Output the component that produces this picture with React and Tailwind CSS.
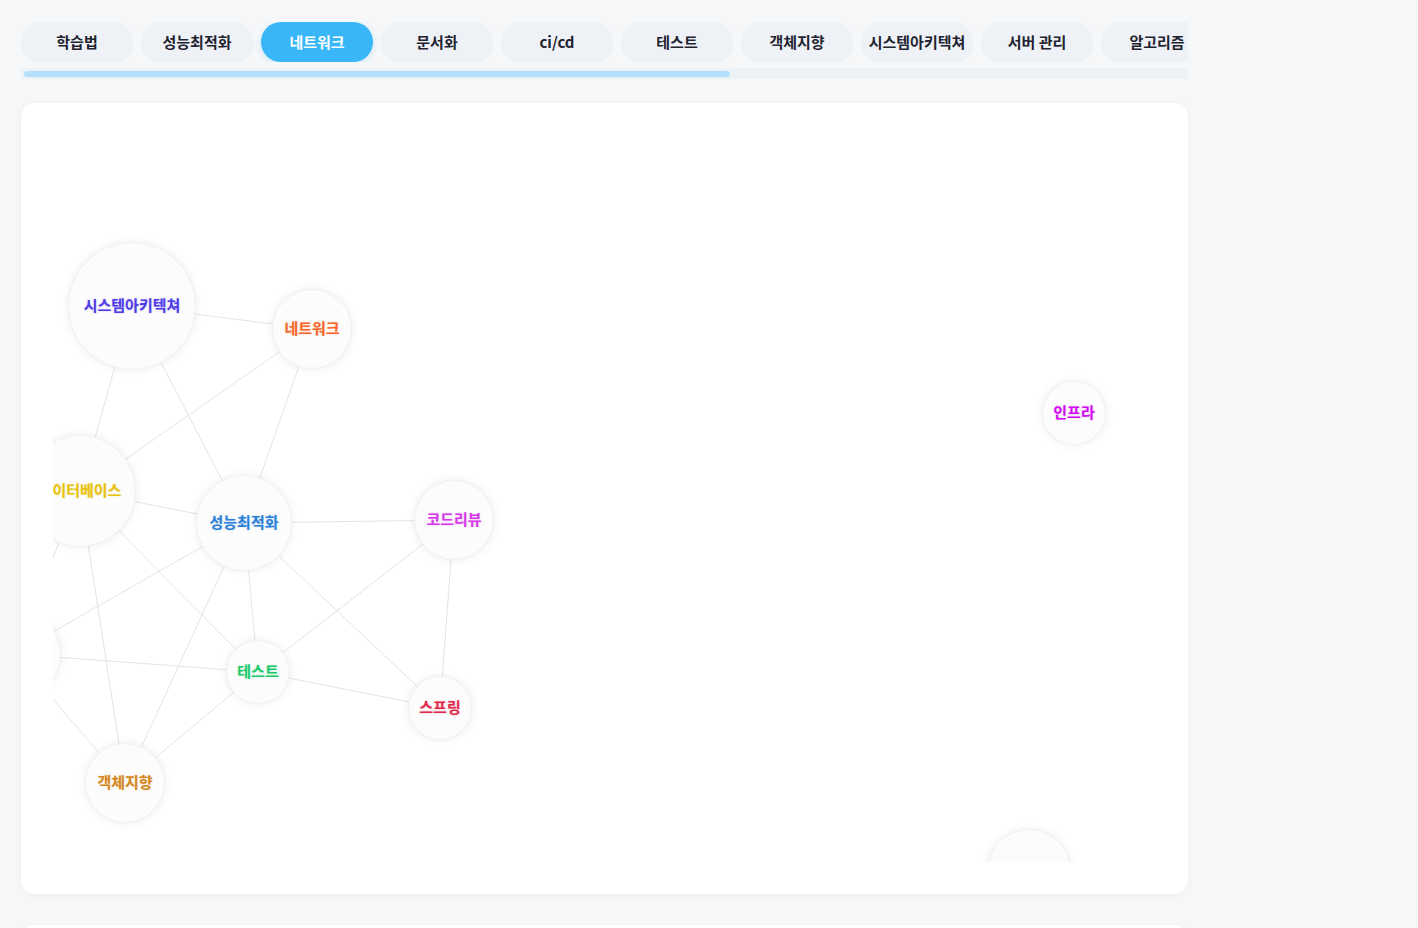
import React from "react";

const tabs = ["학습법", "성능최적화", "네트워크", "문서화", "ci/cd", "테스트", "객체지향", "시스템아키텍쳐", "서버 관리", "알고리즘"];

const OX = 53;
const OY = 135;

const nodes = {
  arch: { label: "시스템아키텍쳐", x: 132, y: 306, r: 64, color: "#4f3be6" },
  net: { label: "네트워크", x: 312, y: 329, r: 40, color: "#f5662a" },
  infra: { label: "인프라", x: 1074, y: 413, r: 32, color: "#d00cf0" },
  db: { label: "데이터베이스", x: 80, y: 491, r: 56, color: "#e8c10c" },
  perf: { label: "성능최적화", x: 244, y: 523, r: 48, color: "#2b80d6" },
  review: { label: "코드리뷰", x: 454, y: 520, r: 40, color: "#d43ae8" },
  left: { label: "", x: 14, y: 654, r: 47, color: "#888" },
  test: { label: "테스트", x: 258, y: 672, r: 32, color: "#1dc96a" },
  spring: { label: "스프링", x: 440, y: 708, r: 32, color: "#e0284c" },
  oop: { label: "객체지향", x: 125, y: 783, r: 40, color: "#d3871f" },
  bottom: { label: "", x: 1029, y: 871, r: 42, color: "#888" },
};

const edges = [
  ["arch", "net"],
  ["arch", "db"],
  ["arch", "perf"],
  ["net", "db"],
  ["net", "perf"],
  ["db", "perf"],
  ["db", "test"],
  ["db", "oop"],
  ["db", "left"],
  ["perf", "review"],
  ["perf", "left"],
  ["perf", "test"],
  ["perf", "spring"],
  ["perf", "oop"],
  ["review", "test"],
  ["review", "spring"],
  ["test", "spring"],
  ["test", "left"],
  ["test", "oop"],
  ["left", "oop"],
];

function Node({ n }) {
  return (
    <div
      className="absolute flex items-center justify-center rounded-full bg-[#fcfcfc] border border-[#f1f1f1] shadow-[0_0_8px_rgba(0,0,0,0.08)]"
      style={{
        left: n.x - OX - n.r,
        top: n.y - OY - n.r,
        width: n.r * 2,
        height: n.r * 2,
      }}
    >
      <span
        className="-translate-y-[2px] whitespace-nowrap text-[15px] font-bold leading-none"
        style={{ color: n.color, textShadow: `0 0 2px ${n.color}55` }}
      >
        {n.label}
      </span>
    </div>
  );
}

export default function App() {
  return (
    <div
      className="min-h-[928px] bg-[#f6f7f9] pl-[21px] pt-[22px] overflow-hidden"
      style={{ fontFamily: '"Noto Sans CJK KR", "Noto Sans", sans-serif' }}
    >
      <div className="w-[1167px]">
        <div className="flex gap-2 overflow-hidden">
          {tabs.map((t, i) => (
            <div
              key={t}
              className={
                i === 2
                  ? "flex h-10 w-[112px] shrink-0 items-center justify-center rounded-full bg-[#38b6f8] text-[15px] font-bold text-white shadow-[0_2px_6px_rgba(56,182,248,0.25)]"
                  : "flex h-10 w-[112px] shrink-0 items-center justify-center rounded-full bg-[#eef1f6] text-[15px] font-bold text-[#1f2430] shadow-[0_1px_3px_rgba(0,0,0,0.03)]"
              }
            >
              {t}
            </div>
          ))}
        </div>
        <div className="mt-[6px] h-[11px] bg-[#edf2f7] pl-[3px] pt-[3px]">
          <div className="h-[6px] w-[706px] rounded-full bg-[#b3e1fb]" />
        </div>

        <div className="mt-6 rounded-[14px] bg-white p-8 shadow-[0_1px_6px_rgba(0,0,0,0.04)]">
          <div className="relative h-[727px] overflow-hidden">
            <svg className="absolute inset-0" width="1103" height="727">
              {edges.map(([a, b], i) => {
                const A = nodes[a];
                const B = nodes[b];
                return (
                  <line
                    key={i}
                    x1={A.x - OX}
                    y1={A.y - OY}
                    x2={B.x - OX}
                    y2={B.y - OY}
                    stroke="#e4e4e4"
                    strokeWidth="1"
                  />
                );
              })}
            </svg>
            {Object.entries(nodes).map(([k, n]) => (
              <Node key={k} n={n} />
            ))}
          </div>
        </div>

        <div className="mt-[31px] h-[200px] rounded-[14px] bg-white shadow-[0_1px_6px_rgba(0,0,0,0.05)]" />
      </div>
    </div>
  );
}
